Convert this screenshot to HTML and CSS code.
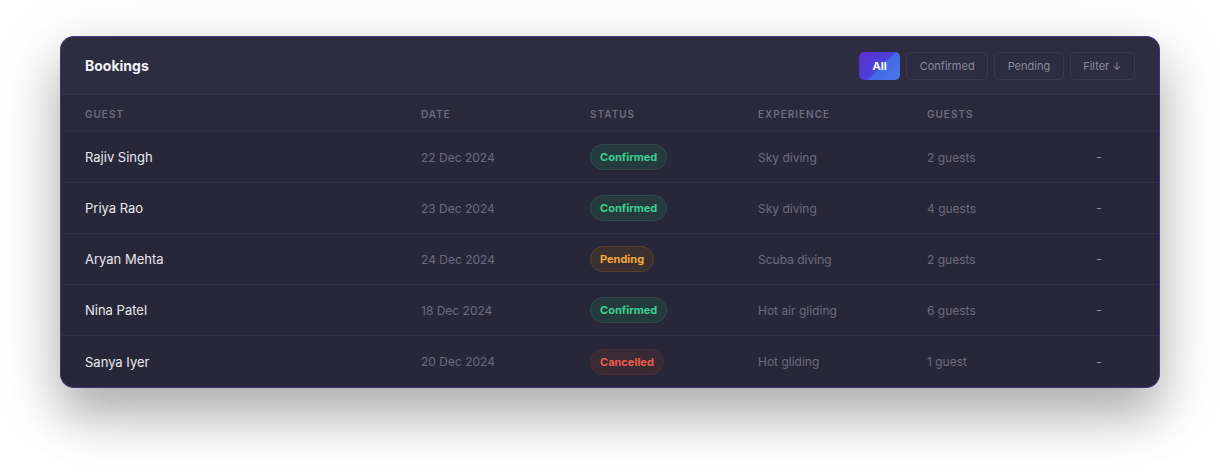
FILE: index.html
```html
<!DOCTYPE html>
<html lang="en">
<head>
    <link rel="stylesheet" href="styles.css">
    <meta charset="UTF-8">
    <title>Bookings</title>
</head>
<body>
<div class="card">
    <div class="card-head">
        <h2 class="title">Bookings</h2>
        <div class="filters">
            <button class="btn active">All</button>
            <button class="btn">Confirmed</button>
            <button class="btn">Pending</button>
            <button class="btn">Filter <span class="arrow">&#8595;</span></button>
        </div>
    </div>
    <div class="row head">
        <div>Guest</div>
        <div>Date</div>
        <div>Status</div>
        <div>Experience</div>
        <div>Guests</div>
        <div></div>
    </div>
    <div class="row">
        <div class="name">Rajiv Singh</div>
        <div class="muted">22 Dec 2024</div>
        <div><span class="badge confirmed">Confirmed</span></div>
        <div class="muted">Sky diving</div>
        <div class="muted">2 guests</div>
        <div class="dash">-</div>
    </div>
    <div class="row">
        <div class="name">Priya Rao</div>
        <div class="muted">23 Dec 2024</div>
        <div><span class="badge confirmed">Confirmed</span></div>
        <div class="muted">Sky diving</div>
        <div class="muted">4 guests</div>
        <div class="dash">-</div>
    </div>
    <div class="row">
        <div class="name">Aryan Mehta</div>
        <div class="muted">24 Dec 2024</div>
        <div><span class="badge pending">Pending</span></div>
        <div class="muted">Scuba diving</div>
        <div class="muted">2 guests</div>
        <div class="dash">-</div>
    </div>
    <div class="row">
        <div class="name">Nina Patel</div>
        <div class="muted">18 Dec 2024</div>
        <div><span class="badge confirmed">Confirmed</span></div>
        <div class="muted">Hot air gliding</div>
        <div class="muted">6 guests</div>
        <div class="dash">-</div>
    </div>
    <div class="row last">
        <div class="name">Sanya Iyer</div>
        <div class="muted">20 Dec 2024</div>
        <div><span class="badge cancelled">Cancelled</span></div>
        <div class="muted">Hot gliding</div>
        <div class="muted">1 guest</div>
        <div class="dash">-</div>
    </div>
</div>
</body>
</html>
```

FILE: styles.css
```css
html {
    background: #ffffff;
}
body {
    margin: 0;
    min-height: 472px;
    box-sizing: border-box;
    font-family: Inter, "Noto Sans", sans-serif;
    padding: 36px 60px;
}
.card {
    width: 1100px;
    box-sizing: border-box;
    background: #28273a;
    border: 1px solid #3f3870;
    border-top-color: #473b86;
    border-radius: 14px;
    overflow: hidden;
    box-shadow: 0 28px 46px rgba(0, 0, 0, 0.25), 0 14px 80px rgba(0, 0, 0, 0.12);
}
.card-head {
    display: flex;
    align-items: center;
    justify-content: space-between;
    height: 57px;
    padding: 0 24px;
    background: #2d2c40;
    border-bottom: 1px solid #33324a;
}
.title {
    margin: 0;
    font-size: 14px;
    font-weight: 700;
    color: #f2f2f6;
}
.filters {
    display: flex;
    gap: 6px;
}
.btn {
    height: 28px;
    padding: 0 12.5px;
    font-family: inherit;
    font-size: 11px;
    color: #8b8a9c;
    background: transparent;
    border: 1px solid #3b3a50;
    border-radius: 5px;
}
.btn.active {
    width: 41px;
    padding: 0;
    color: #ffffff;
    font-weight: 700;
    border: none;
    background: linear-gradient(135deg, #5a2ed0 0%, #4d3fd8 50%, #416ce6 56%, #4a75ea 100%);
}
.arrow {
    font-size: 11px;
}
.row {
    display: grid;
    grid-template-columns: 336px 169px 168px 169px 168px 1fr;
    align-items: center;
    height: 50px;
    padding: 0 24px;
    border-bottom: 1px solid #302f44;
    font-size: 13px;
}
.row.last {
    height: 51px;
    border-bottom: none;
}
.row.head {
    height: 35px;
    padding-top: 1px;
    background: #2a293c;
    font-size: 10px;
    font-weight: 600;
    letter-spacing: 1px;
    text-transform: uppercase;
    color: #6e6d80;
    border-bottom-color: #2f2e43;
}
.name {
    color: #e8e8ef;
}
.muted {
    color: #6c6b7e;
    font-size: 12px;
}
.dash {
    color: #8a899a;
    padding-left: 1px;
}
.badge {
    display: inline-block;
    padding: 5px 9px;
    font-size: 11px;
    font-weight: 700;
    border-radius: 999px;
    border: 1px solid;
}
.badge.confirmed {
    color: #3ccf91;
    background: #243a3d;
    border-color: #2f4d4e;
}
.badge.pending {
    color: #f2a93b;
    background: #3a3030;
    border-color: #564431;
}
.badge.cancelled {
    color: #ec5d4d;
    background: #3a2a33;
    border-color: #4a2f37;
}
```
